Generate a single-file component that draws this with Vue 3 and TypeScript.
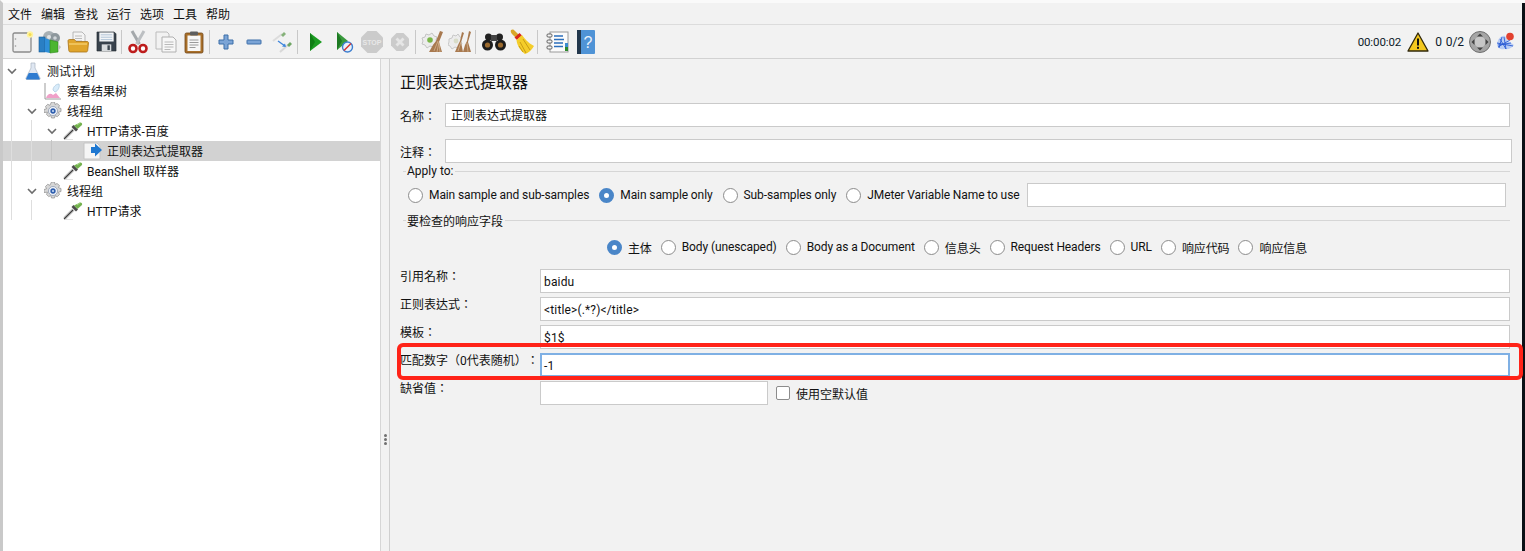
<script setup lang="ts">
const menus: string[] = ['文件', '编辑', '查找', '运行', '选项', '工具', '帮助']

interface TreeRow { label: string; depth: number; icon: string; open?: boolean; selected?: boolean }
const rows: TreeRow[] = [
  { label: '测试计划', depth: 0, icon: 'flask', open: true },
  { label: '察看结果树', depth: 1, icon: 'graph' },
  { label: '线程组', depth: 1, icon: 'gear', open: true },
  { label: 'HTTP请求-百度', depth: 2, icon: 'pipette', open: true },
  { label: '正则表达式提取器', depth: 3, icon: 'extract', selected: true },
  { label: 'BeanShell 取样器', depth: 2, icon: 'pipette' },
  { label: '线程组', depth: 1, icon: 'gear', open: true },
  { label: 'HTTP请求', depth: 2, icon: 'pipette' }
]

const applyOptions = [
  { label: 'Main sample and sub-samples', on: false },
  { label: 'Main sample only', on: true },
  { label: 'Sub-samples only', on: false },
  { label: 'JMeter Variable Name to use', on: false }
]
const fieldOptions = [
  { label: '主体', on: true },
  { label: 'Body (unescaped)', on: false },
  { label: 'Body as a Document', on: false },
  { label: '信息头', on: false },
  { label: 'Request Headers', on: false },
  { label: 'URL', on: false },
  { label: '响应代码', on: false },
  { label: '响应信息', on: false }
]
const formRows = [
  { label: '引用名称：', value: 'baidu' },
  { label: '正则表达式：', value: '<title>(.*?)</title>' },
  { label: '模板：', value: '$1$' },
  { label: '匹配数字（0代表随机）：', value: '-1', focus: true }
]
</script>

<template>
  <div class="screen">
    <div class="app">
      <nav class="menubar">
        <span v-for="m in menus" :key="m" class="menu">{{ m }}</span>
      </nav>

      <div class="toolbar">
        <div class="tool">
          <svg width="24" height="24" viewBox="0 0 24 24"><rect x="3" y="3" width="18" height="19" rx="1.500" fill="#eeeeee" stroke="#8a8a8a" stroke-width="1.300"/><circle cx="5.500" cy="9" r=".8" fill="#999"/><circle cx="5.500" cy="16" r=".8" fill="#999"/><circle cx="20" cy="4.500" r="3.200" fill="#fff3a0"/><circle cx="20" cy="4.500" r="1.500" fill="#f4dc50"/></svg>
        </div>
        <div class="tool">
          <svg width="24" height="24" viewBox="0 0 24 24"><circle cx="11" cy="7" r="6" fill="#a8b0b4"/><circle cx="17" cy="8" r="5" fill="#8d979c"/><circle cx="11" cy="7" r="2" fill="#dfe3e5"/><circle cx="17" cy="8" r="1.800" fill="#cfd5d8"/><rect x="1" y="7" width="6" height="15" fill="#2a7fc4" stroke="#175a96" stroke-width=".6"/><path d="M7 8l5 2v13l-5-1z" fill="#2f8ed8"/><path d="M12 10l8 2v10l-8 1z" fill="#4cb530" stroke="#2c8a18" stroke-width=".6"/><path d="M20 14l3 3-3 4z" fill="#bfbfbf"/></svg>
        </div>
        <div class="tool">
          <svg width="24" height="24" viewBox="0 0 24 24"><path d="M7 2h9l3 3v9H7z" fill="#f4f4f4" stroke="#a8a8a8" stroke-width=".8"/><path d="M9 6h7M9 8.500h7M9 11h7" stroke="#b5b5b5" stroke-width=".9"/><path d="M2 11c0-1 .6-1.500 1.500-1.500h5l1.500 2h11c1 0 1.500.6 1.500 1.500l-.8 7.500c-.1.900-.7 1.500-1.700 1.500H4.500c-1 0-1.600-.6-1.700-1.500z" fill="#e0a52c" stroke="#a8731a" stroke-width=".8"/><path d="M3 14h18" stroke="#f5cd6a" stroke-width="1.500"/></svg>
        </div>
        <div class="tool">
          <svg width="21" height="21" viewBox="0 0 22 22"><path d="M1 1h18l2 2v18H1z" fill="#38424c" stroke="#22282e" stroke-width=".6"/><rect x="3.500" y="1.500" width="15" height="9.500" fill="#f3f5f7"/><path d="M5 4h12M5 6.500h12M5 9h12" stroke="#9fb7cf" stroke-width=".8"/><rect x="6" y="14" width="10" height="7" fill="#d9dcde"/><rect x="12" y="15" width="2.500" height="5" fill="#3d4750"/></svg>
        </div>
        <i class="sep"></i>
        <div class="tool">
          <svg width="20" height="24" viewBox="0 0 20 24"><path d="M4 1l7.500 13" stroke="#a4a8ab" stroke-width="3"/><path d="M16 1L8.500 14" stroke="#bcbfc2" stroke-width="3"/><circle cx="5" cy="18.500" r="3.500" fill="#fff" stroke="#bd1c1c" stroke-width="2.600"/><circle cx="15" cy="18.500" r="3.500" fill="#fff" stroke="#bd1c1c" stroke-width="2.600"/></svg>
        </div>
        <div class="tool">
          <svg width="24" height="24" viewBox="0 0 24 24"><path d="M2 2h11l2 2v15H2z" fill="#f2f2f2" stroke="#bcbcbc"/><path d="M8 7h11l3 3v12H8z" fill="#f7f7f7" stroke="#b0b0b0"/><path d="M10.500 12h9M10.500 14.500h9M10.500 17h9M10.500 19.500h6" stroke="#b9b9b9"/></svg>
        </div>
        <div class="tool">
          <svg width="20" height="24" viewBox="0 0 20 24"><rect x="1" y="3" width="18" height="20" rx="1.500" fill="#a9702a" stroke="#6f4516" stroke-width=".8"/><rect x="3.500" y="5.500" width="13" height="15.500" fill="#f7f7f7"/><path d="M5.500 10h9M5.500 12.500h9M5.500 15h9M5.500 17.500h6" stroke="#9a9a9a"/><rect x="6" y="1.500" width="8" height="4" rx="1" fill="#5d5d5d"/></svg>
        </div>
        <i class="sep"></i>
        <div class="tool">
          <svg width="16" height="16" viewBox="0 0 16 16"><path d="M6 1h4v5h5v4h-5v5H6v-5H1V6h5z" fill="#7ba4d6" stroke="#3d6ea8"/></svg>
        </div>
        <div class="tool">
          <svg width="16" height="16" viewBox="0 0 16 16"><rect x="1" y="6" width="14" height="4" rx=".5" fill="#7ba4d6" stroke="#3d6ea8"/></svg>
        </div>
        <div class="tool">
          <svg width="24" height="24" viewBox="0 0 24 24"><path d="M3 11l9-7" stroke="#dcdcdc" stroke-width="2"/><path d="M11 5l3-3 2 2-3 3z" fill="#86b27a"/><path d="M10 22l8-7" stroke="#d8d8d8" stroke-width="2"/><path d="M17 15l3-3 2 2-3 3z" fill="#6fa564"/><path d="M8 11l7 5" stroke="#3f86dc" stroke-width="1.400"/><path d="M12 16.500l4 .5-1-3.500z" fill="#3f86dc"/></svg>
        </div>
        <i class="sep m2"></i>
        <div class="tool">
          <svg width="12" height="18" viewBox="0 0 12 18"><path d="M0 0l12 9L0 18z" fill="#1c9c22"/><path d="M0 0v18l5-9z" fill="#0f7d15"/></svg>
        </div>
        <div class="tool">
          <svg width="20" height="24" viewBox="0 0 20 24"><path d="M3 2l11 9L3 20z" fill="#39993c"/><path d="M3 2v18l5-9z" fill="#1d7a22"/><circle cx="13.500" cy="17" r="5" fill="#e9f1fb" stroke="#3d7fd0" stroke-width="1.400"/><path d="M10 20.500l7-7" stroke="#d8322c" stroke-width="1.500"/></svg>
        </div>
        <div class="tool">
          <svg width="22" height="22" viewBox="0 0 22 22"><path d="M6.500 0h9L22 6.500v9L15.500 22h-9L0 15.500v-9z" fill="#cbcbcb"/><text x="11" y="13.800" text-anchor="middle" class="stop">STOP</text></svg>
        </div>
        <div class="tool">
          <svg width="18" height="18" viewBox="0 0 18 18"><path d="M5.500 0h7L18 5.500v7L12.500 18h-7L0 12.500v-7z" fill="#cbcbcb"/><path d="M5.500 5.500l7 7M12.500 5.500l-7 7" stroke="#e6e6e6" stroke-width="2.800"/></svg>
        </div>
        <i class="sep"></i>
        <div class="tool">
          <svg width="24" height="24" viewBox="0 0 24 24"><path d="M2 8l3-1 1-3 3 1 3-2 2 3 3 1-1 3 1 3-3 1-1 3-3-1-3 2-2-3-3-1 1-3z" fill="#ececec" stroke="#c4c4c4"/><circle cx="10" cy="10" r="2.800" fill="#7ab648"/><path d="M20 1l3 1-4 10 3 10H9l4-7 3-4z" fill="#a8794f"/><path d="M14 21l4-10M17 22l2-10M20 22l-1-9" stroke="#d3b38f" stroke-width=".8"/></svg>
        </div>
        <div class="tool">
          <svg width="24" height="24" viewBox="0 0 24 24"><path d="M1 9l3-1 1-3 3 1 2-2 2 3 2 1-1 3 1 3-3 1-1 3-3-1-3 2-2-3-2-1 1-3z" fill="#ececec" stroke="#c8c8c8"/><circle cx="8" cy="11" r="2.400" fill="#d8dcc8"/><path d="M14 2l2 1-3 9 2 10H7l3-7 2-4z" fill="#a8794f"/><path d="M21 1l2 1-3 10 3 10h-8l2-7 2-4z" fill="#a8794f"/><path d="M10 21l3-9M20 22l-1-9" stroke="#d3b38f" stroke-width=".8"/></svg>
        </div>
        <i class="sep m2"></i>
        <div class="tool">
          <svg width="24" height="20" viewBox="0 0 24 20"><circle cx="6.500" cy="5" r="3.500" fill="#222"/><circle cx="17.500" cy="5" r="3.500" fill="#222"/><rect x="9" y="3" width="6" height="6" fill="#444"/><circle cx="5.500" cy="13" r="5.500" fill="#1c1c1c"/><circle cx="18.500" cy="13" r="5.500" fill="#1c1c1c"/><circle cx="5.500" cy="13" r="2.600" fill="#9b6a2e"/><circle cx="18.500" cy="13" r="2.600" fill="#9b6a2e"/></svg>
        </div>
        <div class="tool">
          <svg width="24" height="26" viewBox="0 0 24 26"><path d="M1 1c1.500-1 3-.5 4 1l4 4-3 3-4-4C1 4 .4 2 1 1z" fill="#d9a628"/><path d="M4.500 8.500l5-4.500 2.500 2.500-5 4.500z" fill="#d8261c"/><path d="M6.500 11l5.500-5c2 3 6 8 12 11-2 4-6 7-9 8-4-3-8-8-8.500-14z" fill="#f4cd2a"/><path d="M10 13l6 11M13 10l7 11M9 17l4 6" stroke="#c99c14"/></svg>
        </div>
        <i class="sep m4"></i>
        <div class="tool">
          <svg width="24" height="22" viewBox="0 0 24 22"><rect x="4" y="1" width="18" height="20" fill="#fbfbfb" stroke="#9a9a9a"/><path d="M8 5h9M8 8.500h10M8 12h9M8 15.500h9" stroke="#2c6fbc" stroke-width="1.300"/><rect x="19" y="12" width="3" height="4" fill="#3c8ccf"/><rect x="19" y="16" width="3" height="4" fill="#2d8a2d"/><rect x="1" y="3" width="5" height="3" rx="1" fill="#f5f5f5" stroke="#444" stroke-width=".8"/><rect x="1" y="9" width="5" height="3" rx="1" fill="#f5f5f5" stroke="#444" stroke-width=".8"/><rect x="1" y="15" width="5" height="3" rx="1" fill="#f5f5f5" stroke="#444" stroke-width=".8"/></svg>
        </div>
        <div class="tool">
          <svg width="18" height="24" viewBox="0 0 18 24"><rect x="0" y="0" width="18" height="24" rx="1" fill="#4f93d6"/><rect x="0" y="0" width="4" height="24" fill="#23384d"/><text x="11" y="18" text-anchor="middle" class="help">?</text></svg>
        </div>

        <div class="status">
          <span class="clock">00:00:02</span>
          <svg class="warn" width="22" height="20" viewBox="0 0 22 20"><path d="M11 1l10 18H1z" fill="#f4c81e" stroke="#31280a" stroke-width="1.300" stroke-linejoin="round"/><rect x="10" y="6.500" width="2" height="7" fill="#111"/><rect x="10" y="14.800" width="2" height="2" fill="#111"/></svg>
          <span class="count">0</span>
          <span class="threads">0/2</span>
          <svg class="expand" width="22" height="22" viewBox="0 0 22 22"><circle cx="11" cy="11" r="10.500" fill="#a5a5a5" stroke="#6f6f6f"/><circle cx="11" cy="11" r="5.500" fill="#c7c7c7"/><path d="M11 2.500l3 3h-6zM11 19.500l3-3h-6zM2.500 11l3-3v6zM19.500 11l-3-3v6z" fill="#444"/></svg>
          <svg class="log" width="19" height="20" viewBox="0 0 19 20"><path d="M1 12c1-5 4-9 8-8l2 4 7 5c-2 3-6 5-9 4-4 1-8-1-8-5z" fill="#b9cdf4"/><path d="M2 13l13-2M4 7l6 10M8 5l2 12M2 15l12-7M1 11l16 3M6 5l-3 11" stroke="#2a5bd4" stroke-width=".9"/><circle cx="14" cy="4.500" r="3.800" fill="#e2412f"/></svg>
        </div>
      </div>

      <div class="body">
        <aside class="tree">
          <i class="guide g1"></i>
          <i class="guide g2"></i>
          <i class="guide g3"></i>
          <i class="guide g4"></i>
          <div
            v-for="(r, i) in rows"
            :key="i"
            class="row"
            :class="[{ selected: r.selected }, 'depth' + r.depth]"
          >
            <svg v-if="r.open" class="chev" width="10" height="7" viewBox="0 0 10 7"><path d="M1 1l4 4 4-4" fill="none" stroke="#6d6d6d" stroke-width="1.600"/></svg>
            <span v-else class="chev-gap"></span>

            <span class="slot">
              <svg v-if="r.icon === 'flask'" width="16" height="18" viewBox="0 0 16 18"><path d="M6 1h4v5l5 10c.4 1 0 1.500-1 1.500H2c-1 0-1.400-.5-1-1.500l5-10z" fill="#dfe7f2" stroke="#a9b4c2" stroke-width=".7"/><path d="M3.800 11h8.400l2.500 5.500c.2.700-.2 1-.8 1H2c-.6 0-1-.3-.8-1z" fill="#2e7bd0"/></svg>
              <svg v-else-if="r.icon === 'graph'" width="18" height="18" viewBox="0 0 18 18"><path d="M1 1v16h16" fill="none" stroke="#9b9b9b"/><path d="M2 16c2-5 5-5 7-3l3-2 4 5z" fill="#f0a0c8"/><path d="M9 8c0-3 3-6 6-6 1 3-1 7-4 8z" fill="#d9ecfa" stroke="#a7c6dc" stroke-width=".7"/></svg>
              <svg v-else-if="r.icon === 'gear'" width="18" height="18" viewBox="0 0 18 18"><path d="M7.500 0h3l.5 2.500 2-1 2.500 2-1 2.200 2.500.8v3l-2.500.6 1 2.400-2.200 2.200-2.300-1-.5 2.300h-3l-.6-2.400-2.200 1-2.200-2.200 1-2.200L0 10.500v-3l2.500-.7-1-2.300 2.200-2.200 2.200 1z" fill="#d6d6d6" stroke="#8d8d8d" stroke-width=".7"/><circle cx="9" cy="9" r="4.500" fill="#f4f6fa" stroke="#7f8fa8" stroke-width=".7"/><circle cx="9" cy="9" r="2.700" fill="#2f5fae"/><circle cx="9" cy="9" r="1" fill="#cfe0fa"/></svg>
              <svg v-else-if="r.icon === 'pipette'" width="20" height="18" viewBox="0 0 20 18"><path d="M1 17.500h9" stroke="#e4e4e4" stroke-width="1"/><path d="M1.500 16.500L10.500 7.500" stroke="#cfcfcf" stroke-width="3.600"/><path d="M1 17L10 8" stroke="#3c3c3c" stroke-width="1.100"/><path d="M8.500 5l4.500 4.500 2-2L10.500 3z" fill="#4b4b4b"/><path d="M11 3.500l3.500 3.500 4.500-4c.6-1.300-.6-2.800-2-2.400z" fill="#74b24f"/><path d="M14 3l3-2.200" stroke="#a9d98c" stroke-width="1"/></svg>
              <svg v-else width="20" height="18" viewBox="0 0 20 18"><path d="M1 1h13l3 3v13H1z" fill="#f5f5f5" stroke="#c5c5c5"/><path d="M8 5h4V1.500L19 8l-7 6.500V11H8z" fill="#1f78d1"/></svg>
            </span>

            <span class="row-label">{{ r.label }}</span>
          </div>
        </aside>

        <div class="divider">
          <i></i><i></i><i></i>
        </div>

        <main class="panel">
          <h1 class="title">正则表达式提取器</h1>

          <label class="line name">
            <span class="line-label">名称：</span>
            <span class="input wide">正则表达式提取器</span>
          </label>
          <label class="line note">
            <span class="line-label">注释：</span>
            <span class="input wide note-input"></span>
          </label>

          <div class="group first">
            <span class="legend">Apply to:</span>
            <i class="rule"></i>
          </div>
          <div class="apply">
            <span v-for="o in applyOptions" :key="o.label" class="radio-item">
              <i class="radio" :class="{ on: o.on }"></i>{{ o.label }}
            </span>
            <span class="input var-input"></span>
          </div>

          <div class="group second">
            <span class="legend">要检查的响应字段</span>
            <i class="rule"></i>
          </div>
          <div class="fields">
            <span v-for="o in fieldOptions" :key="o.label" class="radio-item">
              <i class="radio" :class="{ on: o.on }"></i>{{ o.label }}
            </span>
          </div>

          <div class="form">
            <template v-for="f in formRows" :key="f.label">
              <span class="form-label">{{ f.label }}</span>
              <span class="input" :class="{ focus: f.focus }">{{ f.value }}</span>
            </template>
            <span class="form-label">缺省值：</span>
            <div class="default-row">
              <span class="input default-input"></span>
              <i class="check"></i>
              <span>使用空默认值</span>
            </div>
          </div>
        </main>
      </div>
    </div>

    <i class="mark"></i>
  </div>
</template>

<style>
html, body { margin: 0; background: #f2f2f2; }
</style>

<style scoped>
.screen {
  position: relative;
  width: 1525px;
  height: 551px;
  overflow: hidden;
  display: flex;
  background: #0b1016;
  font: 12px Roboto, "Noto Sans CJK SC", sans-serif;
  text-spacing-trim: space-all;
  color: #111;
  border-left: 3px solid #c9c9c9;
  border-top: 3px solid #fafafa;
  box-sizing: border-box;
}
.app {
  width: 1519px;
  height: 548px;
  flex: none;
  display: flex;
  flex-direction: column;
  background: #f2f2f2;
}
.menubar {
  height: 21px;
  flex: none;
  display: flex;
  align-items: center;
  gap: 9px;
  padding: 3px 0 0 5px;
  box-sizing: border-box;
}
.menu { font-size: 12px; line-height: 18px; }
.toolbar {
  height: 35px;
  flex: none;
  box-sizing: border-box;
  display: flex;
  align-items: center;
  padding-left: 5px;
  border-top: 1px solid #dcdcdc;
  border-bottom: 1px solid #d2d2d2;
}
.tool {
  width: 28px;
  height: 28px;
  flex: none;
  display: flex;
  align-items: center;
  justify-content: center;
}
.sep {
  width: 1px;
  height: 24px;
  flex: none;
  margin: 0 2px 0 1px;
  background: #c8c8c8;
}
.sep.m2 { margin-right: 4px; }
.sep.m4 { margin-right: 6px; }
.stop {
  font: bold 7px "Liberation Sans", sans-serif;
  fill: #e8e8e8;
}
.help {
  font: 16px "Liberation Sans", sans-serif;
  fill: #e8f1fb;
}
.status {
  margin-left: auto;
  display: flex;
  align-items: center;
  padding-right: 7px;
  color: #0d1b2a;
  letter-spacing: -.1px;
}
.clock { font-size: 11.5px; }
.warn { margin-left: 6px; }
.count { margin-left: 6px; }
.threads { margin-left: 4px; }
.expand { margin-left: 5px; }
.log { margin-left: 5px; }

.body { flex: 1; display: flex; min-height: 0; }
.tree {
  position: relative;
  width: 377px;
  flex: none;
  background: #fff;
  padding-top: 2px;
}
.row {
  position: relative;
  height: 20px;
  display: flex;
  align-items: center;
  white-space: nowrap;
}
.slot {
  width: 16px;
  height: 20px;
  flex: none;
  margin-left: 8px;
  display: flex;
  align-items: center;
  justify-content: center;
}
.slot svg { flex: none; }
.row.depth0 { padding-left: 4px; }
.row.depth1 { padding-left: 24px; }
.row.depth2 { padding-left: 44px; }
.row.depth3 { padding-left: 64px; }
.row.selected { background: #d2d2d2; }
.chev { width: 10px; flex: none; }
.chev-gap { width: 10px; flex: none; }
.row-label { margin-left: 6px; padding-bottom: 2px; }
.guide { position: absolute; z-index: 1; width: 1px; background: #dedede; }
.g1 { left: 8px; top: 21px; height: 140px; }
.g2 { left: 28px; top: 61px; height: 60px; }
.g3 { left: 48px; top: 81px; height: 20px; background: #c4c4c4; }
.g4 { left: 28px; top: 141px; height: 20px; }

.divider {
  width: 8px;
  flex: none;
  display: flex;
  flex-direction: column;
  align-items: center;
  justify-content: center;
  gap: 1px;
  border-left: 1px solid #d6d6d6;
  border-right: 1px solid #cfcfcf;
  padding-top: 268px;
  box-sizing: content-box;
  height: calc(100% - 268px);
}
.divider i { width: 3px; height: 3px; border-radius: 50%; background: #707070; }

.panel {
  flex: 1;
  min-width: 0;
  box-sizing: border-box;
  padding: 0 12px 0 10px;
}
.title {
  margin: 13px 0 0;
  font-size: 16px;
  font-weight: 400;
  line-height: 22px;
}
.line { display: flex; align-items: center; }
.name { margin-top: 9px; }
.note { margin-top: 12px; }
.line-label, .form-label { font-family: Roboto, "Noto Sans CJK TC", sans-serif; }
.line-label { width: 45px; flex: none; padding-top: 1px; box-sizing: border-box; }
.input {
  display: block;
  box-sizing: border-box;
  height: 24px;
  line-height: 24px;
  padding-left: 3px;
  background: #fff;
  border: 1px solid #cacaca;
  white-space: nowrap;
}
.wide { flex: 1; padding-left: 5px; line-height: 25px; }
.note-input { margin-right: -2px; }

.group {
  display: flex;
  align-items: center;
  margin-left: 3px;
  height: 18px;
}
.group.first { margin-top: -1px; }
.group.second { margin-top: 4px; }
.group::before { content: ""; width: 3px; height: 1px; background: #d6d6d6; }
.legend { padding: 0 2px 0 1px; }
.rule { flex: 1; height: 1px; background: #d6d6d6; }

.apply {
  display: flex;
  align-items: center;
  margin: 3px 4px 0 8px;
  height: 24px;
  white-space: nowrap;
  letter-spacing: -.1px;
}
.radio-item { display: inline-flex; align-items: center; }
.radio {
  width: 15px;
  height: 15px;
  box-sizing: border-box;
  flex: none;
  margin-right: 6px;
  border-radius: 50%;
  background: #fff;
  border: 1px solid #8c8c8c;
}
.radio.on {
  background: #fff;
  border: 5px solid #4a86c8;
}
.apply .radio-item { margin-right: 10px; }
.apply .radio-item:nth-last-child(2) { margin-right: 7px; }
.var-input { flex: 1; }
.fields {
  display: flex;
  justify-content: center;
  gap: 9px;
  margin-top: 6px;
  padding-left: 4px;
  height: 24px;
  align-items: center;
  white-space: nowrap;
  letter-spacing: -.1px;
}
.form {
  display: grid;
  grid-template-columns: 140px 1fr;
  grid-auto-rows: 24px;
  row-gap: 4px;
  margin-top: 10px;
}
.form .input { letter-spacing: .15px; }
.form-label { line-height: 16px; }
.focus {
  border: 2px solid #7fb0e4;
  line-height: 22px;
  padding-left: 2px;
}
.default-row { display: flex; align-items: center; }
.default-input { width: 228px; flex: none; }
.check {
  width: 14px;
  height: 14px;
  box-sizing: border-box;
  margin: 0 6px 0 8px;
  background: #fff;
  border: 1px solid #8c8c8c;
  border-radius: 2px;
}
.mark {
  position: absolute;
  left: 394px;
  top: 340px;
  width: 1126px;
  height: 37px;
  box-sizing: border-box;
  border: 4px solid #ff2318;
  border-radius: 6px;
}
</style>
